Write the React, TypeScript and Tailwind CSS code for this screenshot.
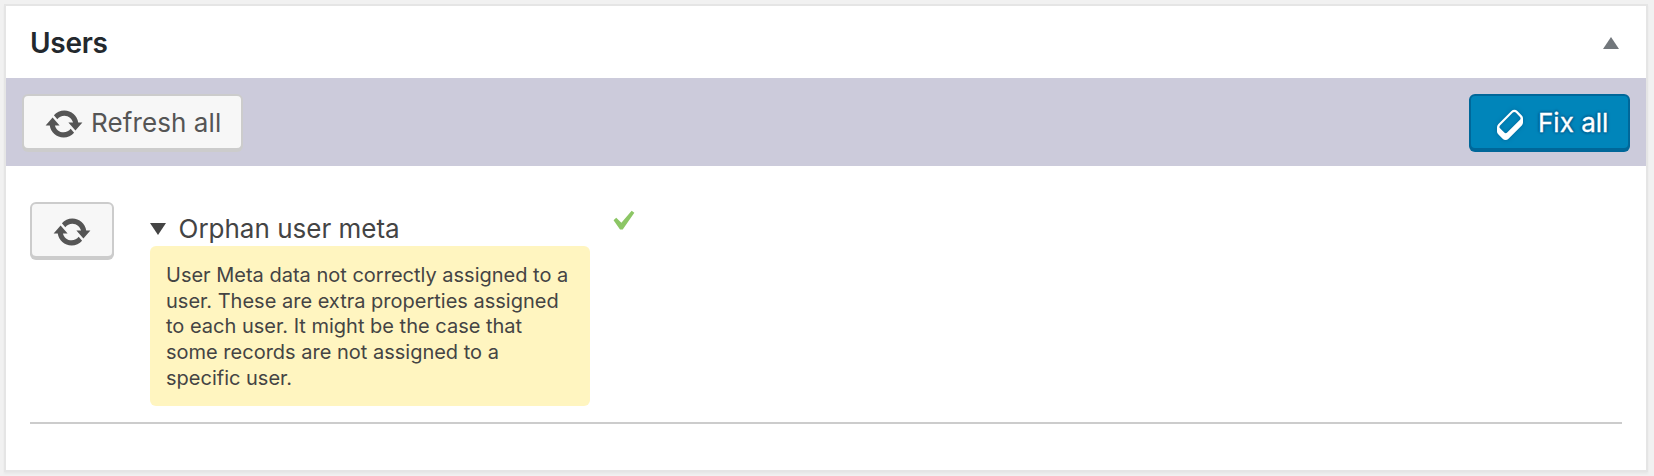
import type { ReactNode } from "react";

function UpdateIcon() {
  return (
    <svg viewBox="0 0 20 20" className="h-10 w-10 shrink-0 fill-[#555]" aria-hidden="true">
      <path d="M10.2 3.28c3.53 0 6.43 2.61 6.92 6h2.08l-3.5 4-3.5-4h2.32c-.45-1.97-2.21-3.45-4.32-3.45-1.45 0-2.73.71-3.54 1.78L4.95 5.66C6.23 4.2 8.11 3.28 10.2 3.28zm-.4 13.44c-3.52 0-6.43-2.61-6.92-6H.8l3.5-4c1.17 1.33 2.33 2.67 3.5 4H5.48c.45 1.97 2.21 3.45 4.32 3.45 1.45 0 2.73-.71 3.54-1.78l1.71 1.95c-1.28 1.46-3.15 2.38-5.25 2.38z" />
    </svg>
  );
}

function EraserIcon() {
  return (
    <svg
      viewBox="0 0 20 20"
      className="h-10 w-10 shrink-0 fill-white drop-shadow-[0_0_2px_#006799]"
      aria-hidden="true"
    >
      <path d="M14.29 4.59l1.1 1.11c.41.4.61.94.61 1.47v2.12c0 .53-.2 1.07-.61 1.47l-6.63 6.63c-.4.41-.94.61-1.47.61s-1.07-.2-1.47-.61l-1.11-1.1-1.1-1.11c-.41-.4-.61-.94-.61-1.47v-2.12c0-.54.2-1.07.61-1.48l6.63-6.62c.4-.41.94-.61 1.47-.61s1.06.2 1.47.61zm-6.21 9.7l6.42-6.42c.39-.39.39-1.03 0-1.43L12.36 4.3c-.19-.19-.45-.29-.72-.29s-.52.1-.71.29l-6.42 6.42c-.39.4-.39 1.04 0 1.43l2.14 2.14c.38.38 1.04.38 1.43 0z" />
    </svg>
  );
}

function Line({ children }: { children: ReactNode }) {
  return <span className="block whitespace-nowrap">{children}</span>;
}

export default function App() {
  return (
    <main className="h-[476px] w-[1654px] bg-[#f1f1f1] pl-1 pt-1 font-['Inter',sans-serif]">
      <section className="h-[468px] w-[1644px] border-2 border-[#e5e5e5] bg-white shadow-[0_2px_2px_rgba(0,0,0,0.04)]">
        <header className="flex h-[72px] items-center justify-between pl-6 pr-[27px] pt-[2px]">
          <h2 className="pb-px text-[28px] leading-8 font-semibold tracking-[-0.3px] text-[#23282d]">Users</h2>
          <svg viewBox="0 0 16 12" className="h-3 w-4 fill-[#72777c]" aria-hidden="true">
            <path d="M0 12 8 0l8 12z" />
          </svg>
        </header>

        <div className="flex h-[88px] items-start justify-between bg-[#cccbdb] px-4 pt-4">
          <button className="flex h-14 w-[221px] items-center rounded-md border-2 border-[#ccc] bg-[#f7f7f7] pl-5 pt-1 text-[26px] text-[#555] shadow-[0_2px_0_#ccc]">
            <UpdateIcon />
            <span className="ml-[7px] pb-[3px] whitespace-nowrap tracking-[0.1px]">Refresh all</span>
          </button>
          <button className="flex h-14 w-[161px] items-center rounded-md border-2 border-[#006799] bg-[#0085ba] pl-5 pt-1 text-[26px] text-white shadow-[0_2px_0_#006799] [text-shadow:0_-2px_2px_#006799,2px_0_2px_#006799,0_2px_2px_#006799,-2px_0_2px_#006799]">
            <EraserIcon />
            <span className="ml-[7px] pb-[3px] whitespace-nowrap [-webkit-text-stroke:0.3px_white]">Fix all</span>
          </button>
        </div>

        <div className="mx-6 flex h-[258px] items-start border-b-2 border-[#ccc] pt-9">
          <button className="flex h-14 w-[84px] items-center justify-center rounded-md border-2 border-[#ccc] bg-[#f7f7f7] pt-1 shadow-[0_2px_0_#ccc]">
            <UpdateIcon />
          </button>
          <div className="ml-9 w-[440px] pt-2 text-[#444]">
            <div className="flex h-9 items-center pt-px">
              <svg viewBox="0 0 16 12" className="h-3 w-4 fill-[#444]" aria-hidden="true">
                <path d="M0 0h16L8 12z" />
              </svg>
              <span className="ml-[12.5px] whitespace-nowrap text-[26px]">Orphan user meta</span>
            </div>
            <p className="h-40 rounded-md bg-[#fff5c0] px-4 pt-[17px] text-[20px] leading-[25.7px]">
              <Line>User Meta data not correctly assigned to a</Line>
              <Line>user. These are extra properties assigned</Line>
              <Line>to each user. It might be the case that</Line>
              <Line>some records are not assigned to a</Line>
              <Line>specific user.</Line>
            </p>
          </div>
          <svg viewBox="0 0 20 20" className="-mt-px ml-3 h-10 w-10 fill-[#8cc665]" aria-label="OK">
            <path d="M14.83 4.89l1.34.94-5.81 8.38H9.02L5.78 9.67l1.34-1.25 2.57 2.4z" />
          </svg>
        </div>
      </section>
    </main>
  );
}
